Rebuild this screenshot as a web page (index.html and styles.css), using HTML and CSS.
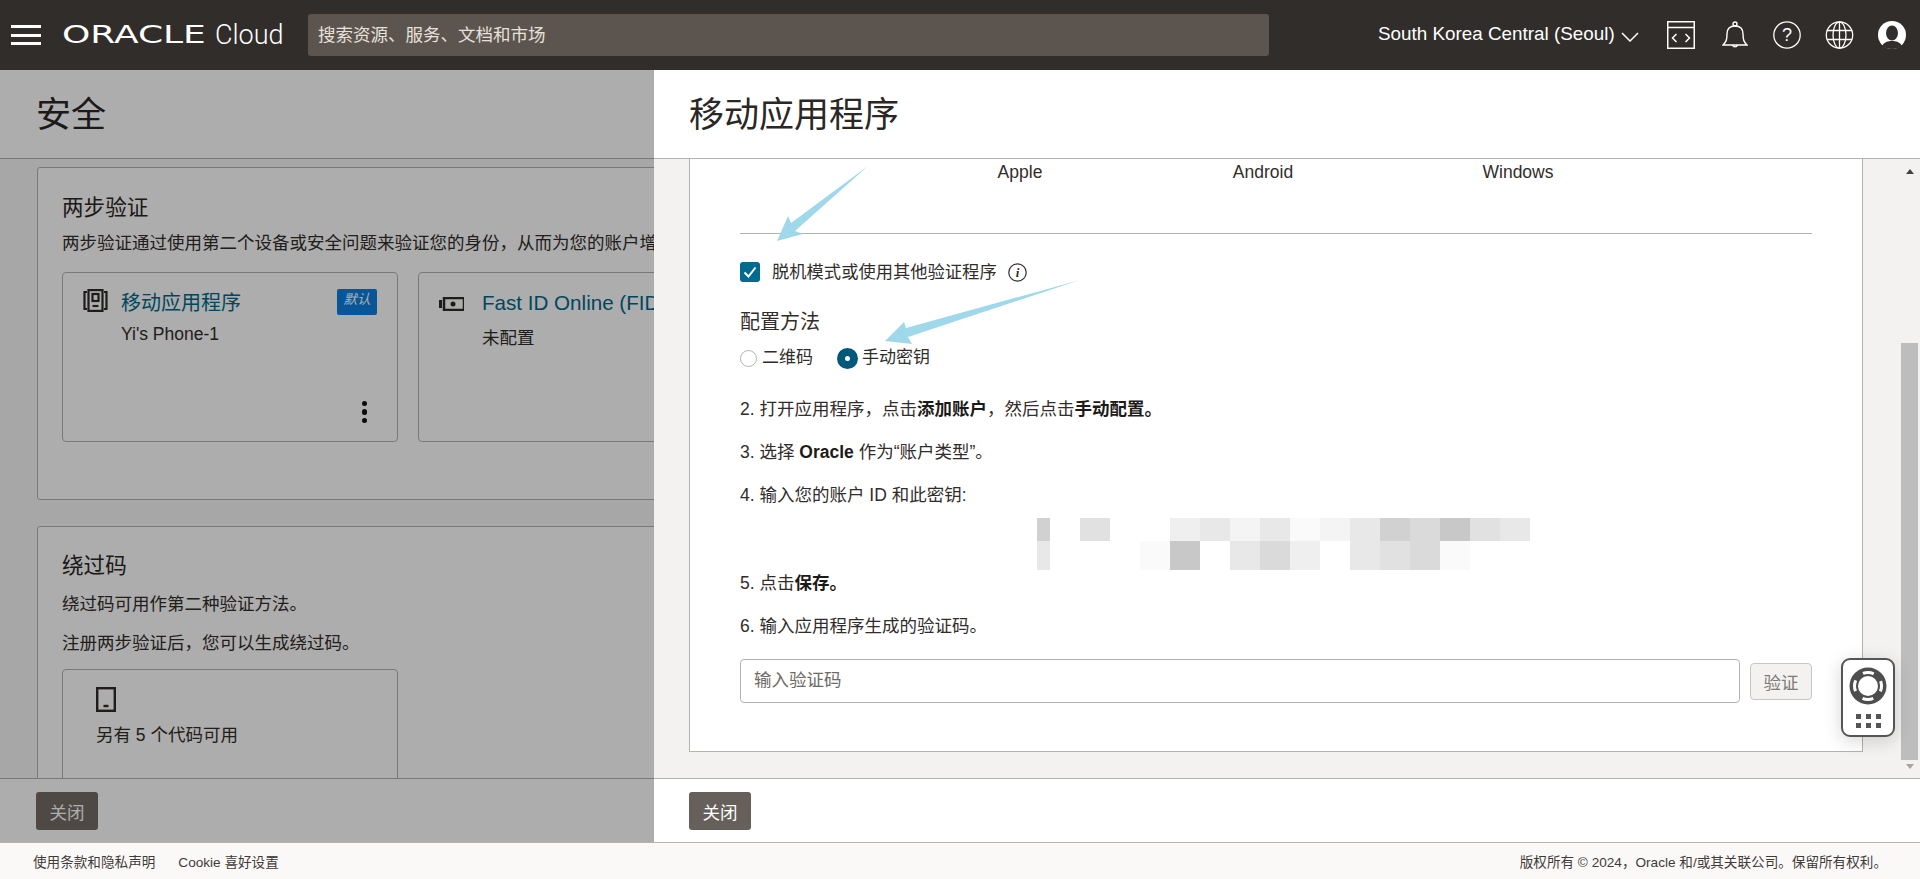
FILE: index.html
```html
<!DOCTYPE html>
<html lang="zh-CN">
<head>
<meta charset="utf-8">
<title>Oracle Cloud</title>
<link rel="stylesheet" href="styles.css">
</head>
<body>
<header class="topbar">
  <button class="burger" aria-label="menu"><span></span><span></span><span></span></button>
  <div class="logo"><span class="logo-oracle">ORACLE</span><span class="logo-cloud">Cloud</span></div>
  <div class="search">搜索资源、服务、文档和市场</div>
  <div class="top-right">
    <span class="region">South Korea Central (Seoul)</span>
    <svg class="chev" width="18" height="10" viewBox="0 0 18 10"><path d="M1 1l8 8 8-8" fill="none" stroke="#fff" stroke-width="1.5"/></svg>
    <svg class="ti ti-term" width="28" height="28" viewBox="0 0 28 28" fill="none" stroke="#fff" stroke-width="1.5"><rect x=".75" y=".75" width="26.5" height="26.5"/><path d="M1 6.5h26M9.5 13l-4 4 4 4M18.500 13l4 4-4 4"/></svg>
    <svg class="ti ti-bell" width="26" height="28" viewBox="0 0 26 28" fill="none" stroke="#fff" stroke-width="1.4"><path d="M1 24c3-3 4-5 4-11 0-5 3-8 8-8s8 3 8 8c0 6 1 8 4 11z"/><circle cx="13" cy="3" r="2"/><path d="M10.500 24a2.600 2.600 0 0 0 5 0"/></svg>
    <svg class="ti ti-help" width="28" height="28" viewBox="0 0 28 28"><circle cx="14" cy="14" r="13.200" fill="none" stroke="#fff" stroke-width="1.300"/><text x="14" y="20" text-anchor="middle" class="help-q">?</text></svg>
    <svg class="ti ti-globe" width="29" height="28" viewBox="0 0 29 28" fill="none" stroke="#fff" stroke-width="1.300"><circle cx="14.500" cy="14" r="13.200"/><ellipse cx="14.500" cy="14" rx="6.500" ry="13.200"/><path d="M14.500 1v26M2 9.500h25M2 18.500h25"/></svg>
    <svg class="ti ti-user" width="28" height="28" viewBox="0 0 28 28"><circle cx="14" cy="14" r="14" fill="#fff"/><ellipse cx="14" cy="12" rx="6" ry="7.500" fill="#312d2a"/><path d="M4 25c2-4 6-5 10-5s8 1 10 5c-3 2-6 3-10 3s-7-1-10-3z" fill="#312d2a"/></svg>
  </div>
</header>

<main class="stage">
  <section class="panel panel-left">
    <div class="panel-head"><h1>安全</h1></div>
    <div class="panel-body left-body">
      <div class="box box-first">
        <h2>两步验证</h2>
        <p class="nowrap">两步验证通过使用第二个设备或安全问题来验证您的身份，从而为您的账户增加额外一层安全保护。</p>
        <div class="tiles">
          <div class="tile">
            <svg class="tile-icon" width="25" height="23" viewBox="0 0 25 23" fill="none" stroke="#2f2c2a" stroke-width="2.200"><path d="M4 3H1.500v17H4M21 3h2.500v17H21"/><rect x="5.500" y="1.100" width="14" height="20.800"/><rect x="9.500" y="5" width="6" height="7"/><path d="M9.500 17h6"/></svg>
            <div class="tile-main">
              <a class="tile-link">移动应用程序</a>
              <div class="tile-sub">Yi's Phone-1</div>
            </div>
            <span class="badge">默认</span>
            <div class="kebab"><i></i><i></i><i></i></div>
          </div>
          <div class="tile">
            <svg class="tile-icon tile-icon-key" width="25" height="14" viewBox="0 0 25 14"><path d="M0 3h3v8H0z" fill="#2f2c2a"/><path d="M5 1h20v12H5z" fill="none" stroke="#2f2c2a" stroke-width="2.500"/><circle cx="14" cy="7" r="2.500" fill="#2f2c2a"/></svg>
            <div class="tile-main">
              <a class="tile-link nowrap">Fast ID Online (FIDO) 身份验证器</a>
              <div class="tile-sub tile-sub-low">未配置</div>
            </div>
          </div>
        </div>
      </div>
      <div class="box">
        <h2>绕过码</h2>
        <p class="p-a">绕过码可用作第二种验证方法。</p>
        <p class="p-b">注册两步验证后，您可以生成绕过码。</p>
        <div class="code-tile">
          <svg width="20" height="25" viewBox="0 0 20 25" fill="none"><rect x="1.200" y="1.200" width="17.600" height="22.600" stroke="#2f2c2a" stroke-width="2.400"/><path d="M7.500 19h5" stroke="#2f2c2a" stroke-width="2.400"/></svg>
          <div class="code-text">另有 5 个代码可用</div>
        </div>
      </div>
    </div>
    <div class="panel-foot"><button class="btn-dark">关闭</button></div>
    <div class="scrim"></div>
  </section>

  <section class="panel panel-right">
    <div class="panel-head"><h1>移动应用程序</h1></div>
    <div class="panel-body right-body">
      <div class="scroll-pane">
        <div class="sheet">
          <div class="stores"><span class="store-a">Apple</span><span class="store-b">Android</span><span class="store-c">Windows</span></div>
          <hr class="rule">
          <div class="option">
            <span class="check"><svg width="14" height="12" viewBox="0 0 14 12"><path d="M1.500 6.500l4 4L12.500 1.500" fill="none" stroke="#fff" stroke-width="2"/></svg></span>
            <span class="option-text">脱机模式或使用其他验证程序</span>
            <svg class="info" width="19" height="19" viewBox="0 0 19 19"><circle cx="9.500" cy="9.500" r="8.700" fill="none" stroke="#312d2a" stroke-width="1.200"/><text x="9.500" y="14" text-anchor="middle" class="info-i">i</text></svg>
          </div>
          <h3>配置方法</h3>
          <div class="radios">
            <span class="radio"></span><span class="radio-label">二维码</span>
            <span class="radio radio-on"></span><span class="radio-label radio-label-on">手动密钥</span>
          </div>
          <p class="step step-2">2. 打开应用程序，点击<b>添加账户</b>，然后点击<b>手动配置。</b></p>
          <p class="step">3. 选择 <b>Oracle</b> 作为“账户类型”。</p>
          <p class="step">4. 输入您的账户 ID 和此密钥:</p>
          <div class="mosaic">
            <i class="s2"></i><i></i><i class="s4"></i><i></i><i></i><i class="s6"></i><i class="s5"></i><i class="s7"></i><i class="s5"></i><i class="s8"></i><i class="s7"></i><i class="s5"></i><i class="s2"></i><i class="s3"></i><i class="s1"></i><i class="s4"></i><i class="s5"></i>
            <i class="s5"></i><i></i><i></i><i></i><i class="s8"></i><i class="s1"></i><i></i><i class="s5"></i><i class="s3"></i><i class="s6"></i><i></i><i class="s5"></i><i class="s4"></i><i class="s3"></i><i class="s8"></i><i></i><i></i>
          </div>
          <p class="step step-5">5. 点击<b>保存。</b></p>
          <p class="step">6. 输入应用程序生成的验证码。</p>
          <div class="verify">
            <div class="code-input">输入验证码</div>
            <button class="btn-light">验证</button>
          </div>
        </div>
      </div>
      <div class="scrollbar">
        <span class="sb-up"></span>
        <span class="sb-track"></span>
        <span class="sb-thumb"></span>
        <span class="sb-down"></span>
      </div>
    </div>
    <div class="panel-foot"><button class="btn-dark btn-bright">关闭</button></div>
  </section>

  <svg class="arrow arrow-1" width="92" height="76" viewBox="0 0 92 76"><polygon points="91,0 14,57 11,50 0,75 26,68 18,65" fill="#9fd8ea"/></svg>
  <svg class="arrow arrow-2" width="196" height="66" viewBox="0 0 196 66"><polygon points="195,0 21,48 19,42 0,61 27,64 23,57" fill="#9fd8ea"/></svg>

  <div class="help-widget">
    <svg width="38" height="38" viewBox="0 0 38 38"><circle cx="19" cy="19" r="18.500" fill="#4e4e4e"/><circle cx="19" cy="19" r="10" fill="#fff"/><circle cx="19" cy="19" r="13.500" fill="none" stroke="#fff" stroke-width="3" stroke-dasharray="11 10.200" stroke-dashoffset="5.500"/></svg>
    <div class="help-dots"><i></i><i></i><i></i><i></i><i></i><i></i></div>
  </div>
</main>

<footer class="legal">
  <a>使用条款和隐私声明</a>
  <a>Cookie 喜好设置</a>
  <span class="copy">版权所有 © 2024，Oracle 和/或其关联公司。保留所有权利。</span>
</footer>
</body>
</html>
```
FILE: styles.css
```css
* { box-sizing: border-box; }
html, body { margin: 0; height: 100%; }
body {
  display: flex;
  flex-direction: column;
  height: 879px;
  overflow: hidden;
  font-family: "Liberation Sans", "Noto Sans CJK SC", sans-serif;
  font-size: 17.500px;
  line-height: 24px;
  color: #312d2a;
  background: #fff;
}
h1, h2, h3, p { margin: 0; font-weight: 400; }
button { font-family: inherit; }

/* top bar */
.topbar {
  flex: none;
  height: 70px;
  background: #312d2a;
  display: flex;
  align-items: center;
  color: #fff;
}
.burger {
  width: 30px;
  height: 20px;
  margin-left: 11px;
  padding: 0;
  border: 0;
  background: none;
  display: flex;
  flex-direction: column;
  justify-content: space-between;
}
.burger span { display: block; height: 3px; background: #fff; }
.logo { display: flex; align-items: center; margin-left: 21px; width: 256px; }
.logo-oracle {
  display: inline-block;
  width: 153px;
  font-family: "DejaVu Sans", sans-serif;
  font-size: 24px;
  line-height: 28px;
  transform: scaleX(1.5);
  transform-origin: 0 50%;
}
.logo-cloud {
  font-family: Roboto, sans-serif;
  font-weight: 300;
  font-size: 27px;
  line-height: 32px;
}
.search {
  width: 961px;
  height: 42px;
  margin-left: -10px;
  padding-left: 10px;
  border-radius: 3px;
  background: #5c554f;
  color: #e6e1da;
  font-size: 17.500px;
  line-height: 42px;
}
.top-right { flex: 1; display: flex; align-items: center; position: relative; height: 70px; }
.region { margin-left: 109px; font-size: 18.850px; line-height: 26px; margin-top: -2px; white-space: nowrap; }
.chev { margin-left: 6px; margin-top: 3px; }
.ti { display: block; flex: none; }
.ti-term { margin-left: 28px; }
.ti-bell { margin-left: 27px; }
.ti-help { margin-left: 25px; }
.ti-globe { margin-left: 24px; }
.ti-user { margin-left: 24px; }
.help-q { font-family: "Liberation Sans", sans-serif; font-size: 18px; fill: #fff; }

/* stage */
.stage { flex: 1; min-height: 0; display: flex; position: relative; }
.panel { display: flex; flex-direction: column; position: relative; min-width: 0; }
.panel-left { width: 654px; flex: none; overflow: hidden; }
.panel-right { flex: 1; background: #fff; }
.panel-head {
  flex: none;
  height: 89px;
  padding-left: 36px;
  background: #fff;
  border-bottom: 1px solid #b5b3b0;
  display: flex;
  align-items: center;
}
.panel-head h1 { font-size: 35px; line-height: 48px; margin-top: 2px; color: #2a2725; }
.panel-right .panel-head { padding-left: 35px; }
.panel-body { flex: 1; min-height: 0; background: #f3f2f1; overflow: hidden; }
.panel-foot {
  flex: none;
  height: 64px;
  padding: 13px 0 0 36px;
  background: #fff;
  border-top: 1px solid #b5b3b0;
}
.panel-right .panel-foot { padding-left: 35px; }
.btn-dark {
  display: block;
  width: 62px;
  height: 38px;
  padding: 0;
  border: 0;
  border-radius: 3px;
  background: #746c66;
  color: #fff;
  font-size: 17.500px;
}
.btn-bright { background: #665f5a; }
.scrim { position: absolute; inset: 0; background: rgba(0, 0, 0, .32); }

/* left body */
.left-body { padding: 8px 0 0 37px; background: #f8f7f6; }
.box {
  width: 700px;
  padding: 0 0 0 24px;
  background: #fff;
  border: 1px solid #b5b3b0;
  border-radius: 3px;
}
.box-first { height: 333px; margin-bottom: 26px; }
.box h2 { font-size: 21.600px; line-height: 30px; padding-top: 24px; color: #2a2725; }
.box-first h2 { padding-top: 25px; }
.nowrap { white-space: nowrap; }
.box-first p { margin-top: 8px; }
.tiles { display: flex; gap: 20px; margin-top: 17px; }
.tile {
  flex: none;
  width: 336px;
  height: 170px;
  border: 1px solid #b5b3b0;
  border-radius: 4px;
  display: flex;
  align-items: flex-start;
  position: relative;
  padding: 16px 20px;
}
.tile-icon { flex: none; }
.tile-icon-key { margin-top: 8px; }
.tile-main { margin-left: 13px; min-width: 0; }
.tile-icon-key + .tile-main { margin-left: 18px; }
.tile-link { display: block; font-size: 20px; line-height: 28px; color: #00688c; }
.tile-icon-key + .tile-main .tile-link { font-size: 20.600px; }
.tile-sub { margin-top: 5px; }
.tile-sub-low { margin-top: 9px; }
.badge {
  position: absolute;
  top: 16px;
  right: 20px;
  width: 40px;
  height: 26px;
  border-radius: 2px;
  background: #0c7fe0;
  color: #fff;
  font-size: 13.500px;
  font-style: italic;
  line-height: 22px;
  text-align: center;
}
.kebab {
  position: absolute;
  right: 30px;
  bottom: 18px;
  display: flex;
  flex-direction: column;
  gap: 3px;
}
.kebab i { display: block; width: 5.500px; height: 5.500px; border-radius: 50%; background: #111; }
.p-a { margin-top: 11px; }
.p-b { margin-top: 15px; }
.code-tile {
  width: 336px;
  height: 170px;
  margin-top: 14px;
  padding: 17px 33px;
  border: 1px solid #b5b3b0;
  border-radius: 4px;
}
.code-tile svg { display: block; }
.code-text { margin-top: 11px; }

/* right body */
.right-body { display: flex; }
.scroll-pane { flex: 1; min-width: 0; padding-left: 35px; padding-right: 37px; }
.sheet {
  height: 593px;
  padding: 0 50px;
  background: #fff;
  border: solid #b5b3b0;
  border-width: 0 1px 1px;
}
.stores { display: flex; margin-left: 160px; padding-top: 1px; height: 25px; }
.stores span { text-align: center; }
.store-a { width: 240px; }
.store-b { width: 246px; }
.store-c { width: 264px; }
.rule { margin: 49px 0 0; height: 1px; border: 0; background: #b5b3b0; }
.option { display: flex; align-items: center; margin-top: 28px; height: 20px; font-size: 17.300px; }
.check {
  width: 20px;
  height: 20px;
  border-radius: 3px;
  background: #006b8f;
  display: flex;
  align-items: center;
  justify-content: center;
}
.option-text { margin-left: 12px; }
.info { margin-left: 11px; }
.info-i { font-family: "Liberation Serif", serif; font-style: italic; font-weight: 700; font-size: 13px; fill: #312d2a; }
h3 { font-size: 20px; line-height: 28px; margin-top: 26px; }
.radios { display: flex; align-items: center; margin-top: 10px; height: 24px; font-size: 17px; }
.radio {
  width: 17px;
  height: 17px;
  border-radius: 50%;
  border: 1px solid #b5b3b0;
  background: #fff;
}
.radio-label { margin-left: 5px; }
.radio-on {
  width: 21px;
  height: 21px;
  margin-left: 24px;
  border: 8px solid #00587a;
  background: #fff;
}
.radio-label-on { margin-left: 4px; }
.step { margin-top: 19px; }
.step-2 { margin-top: 27px; }
.step b { font-weight: 700; color: #1d1b19; }
.mosaic {
  display: grid;
  grid-template-columns: 13px repeat(16, 30px);
  grid-template-rows: 23px 29px;
  margin: 11px 0 0 297px;
  width: 493px;
}
.mosaic i { display: block; }
.s1 { background: #c8c8c8; }
.s2 { background: #d1d1d1; }
.s3 { background: #dadada; }
.s4 { background: #e1e1e1; }
.s5 { background: #e8e8e8; }
.s6 { background: #efefef; }
.s7 { background: #f4f4f4; }
.s8 { background: #fafafa; }
.step-5 { margin-top: 1px; }
.verify { display: flex; align-items: center; gap: 10px; margin-top: 21px; }
.code-input {
  flex: 1;
  height: 44px;
  padding-left: 13px;
  border: 1px solid #b5b3b0;
  border-radius: 4px;
  color: #6f6a65;
  line-height: 40px;
}
.btn-light {
  width: 62px;
  height: 37px;
  padding: 0;
  border: 1px solid #c9c6c2;
  border-radius: 4px;
  background: #f3f2f1;
  color: #7f7a75;
  font-size: 17.500px;
}

/* scrollbar */
.scrollbar {
  flex: none;
  width: 20px;
  padding-right: 2px;
  padding-left: 1px;
  display: flex;
  flex-direction: column;
  align-items: center;
}
.sb-up {
  margin-top: 10px;
  border: 4.500px solid transparent;
  border-top: 0;
  border-bottom: 5px solid #454341;
}
.sb-track { flex: 1; }
.sb-thumb { width: 17px; height: 417px; background: #bdbdbd; }
.sb-down {
  margin: 4px 0 9px;
  border: 4.500px solid transparent;
  border-bottom: 0;
  border-top: 5px solid #a8a6a4;
}

/* annotation arrows */
.arrow { position: absolute; display: block; }
.arrow-1 { left: 777px; top: 96px; }
.arrow-2 { left: 885px; top: 210px; }

/* help launcher */
.help-widget {
  position: absolute;
  left: 1841px;
  top: 588px;
  width: 54px;
  height: 79px;
  padding-top: 7px;
  border: 2px solid #555;
  border-radius: 9px;
  background: #fff;
  box-shadow: 0 4px 18px rgba(0, 0, 0, .16);
  display: flex;
  flex-direction: column;
  align-items: center;
}
.help-dots { display: grid; grid-template-columns: repeat(3, 5px); gap: 4px 5px; margin-top: 9px; }
.help-dots i { display: block; width: 5px; height: 5px; background: #555; }

/* legal footer */
.legal {
  flex: none;
  height: 37px;
  padding: 4px 33px 0;
  display: flex;
  align-items: center;
  gap: 23px;
  background: #fbf9f8;
  border-top: 1px solid #b5b3b0;
  font-size: 13.600px;
  color: #3f3b38;
}
.copy { margin-left: auto; }
```
